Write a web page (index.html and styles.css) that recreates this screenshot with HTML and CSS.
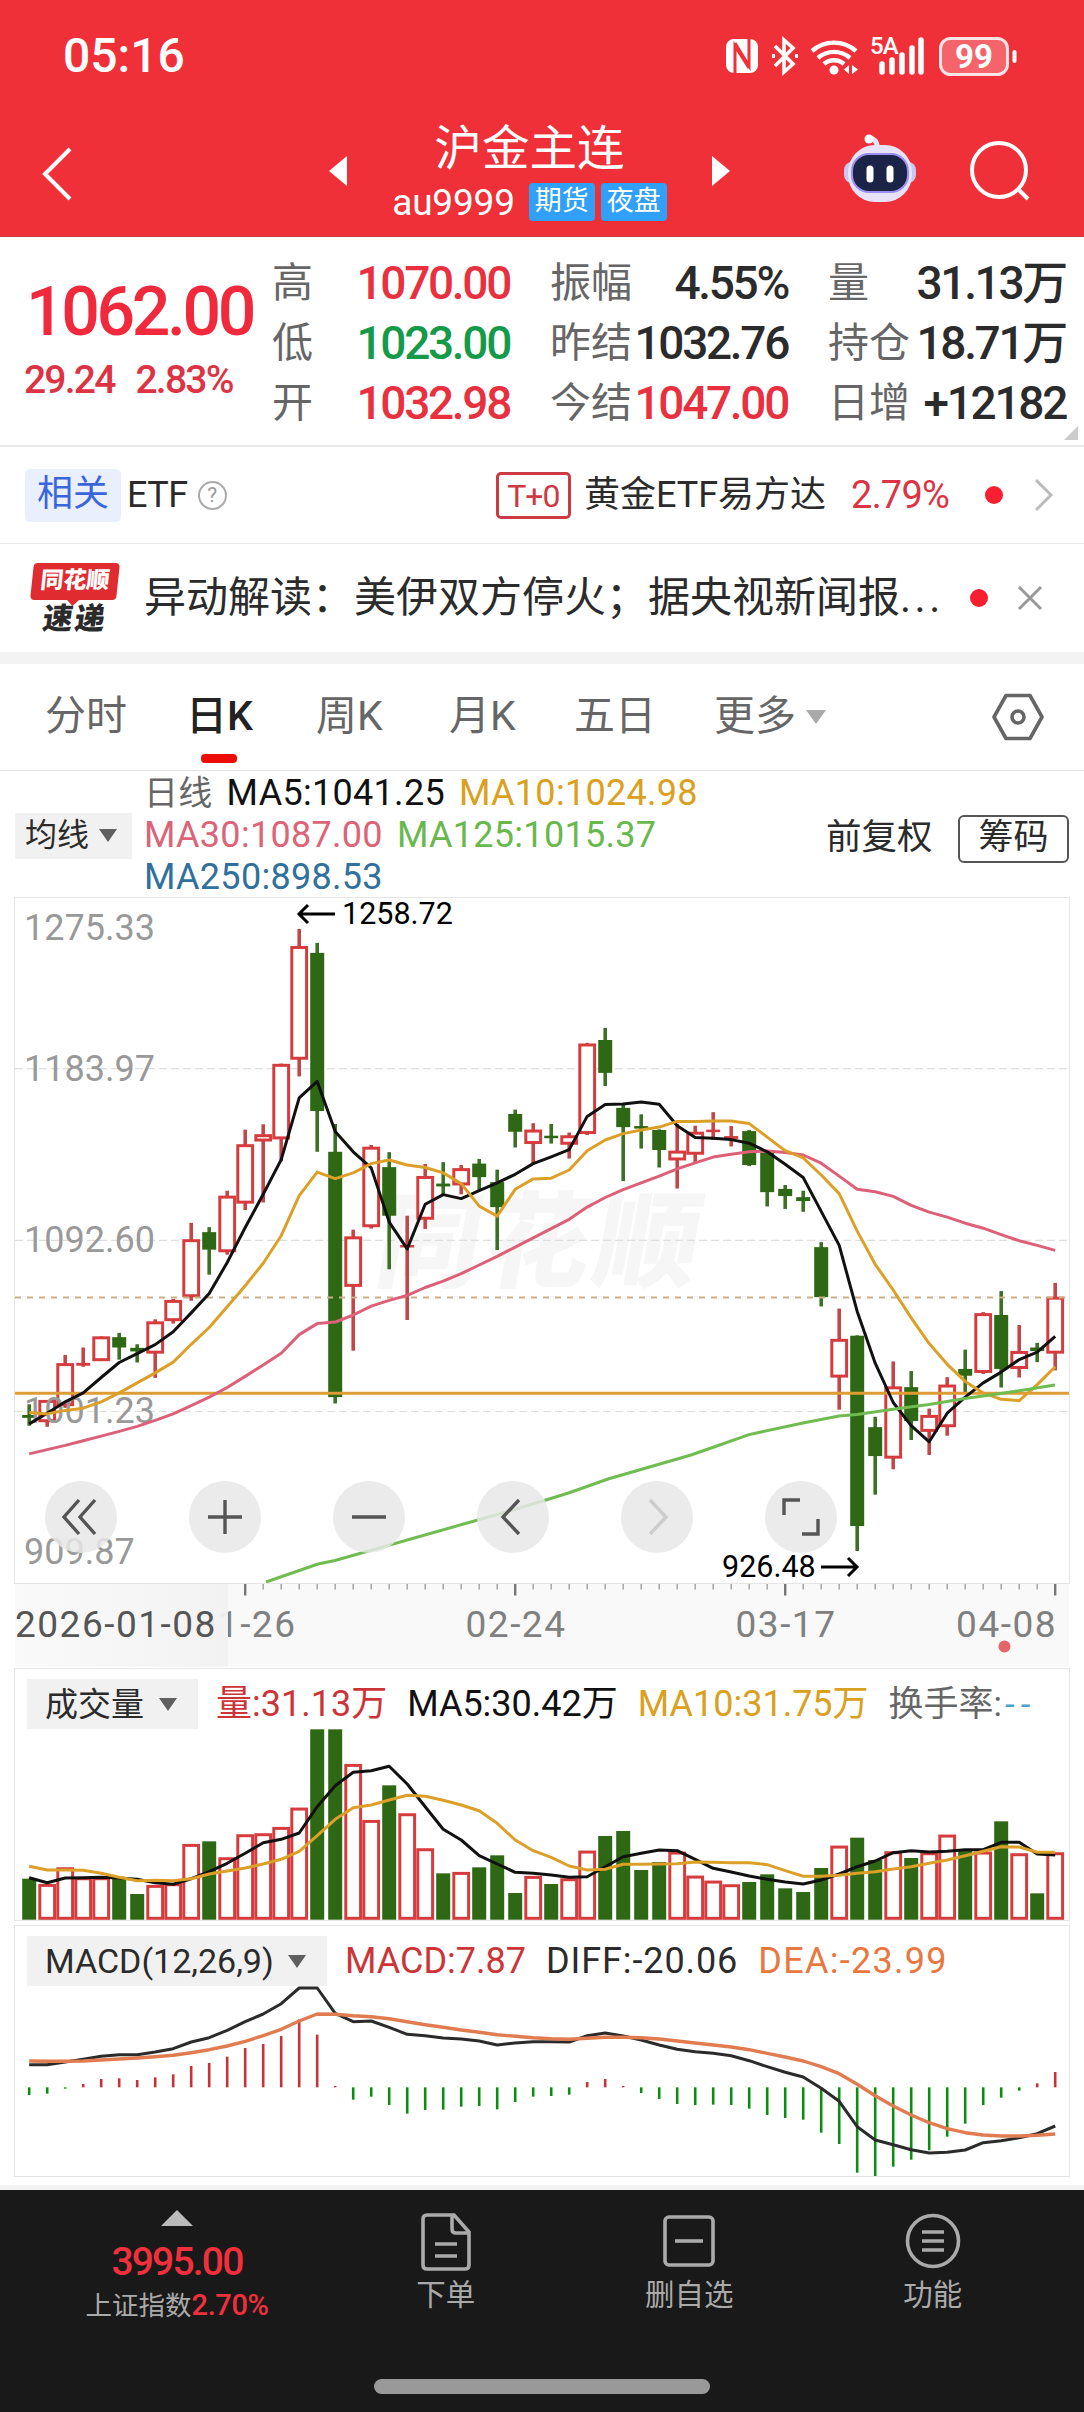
FILE: index.html
```html
<!DOCTYPE html>
<html lang="zh-CN">
<head>
    <meta charset="UTF-8">
    <meta name="viewport" content="width=device-width, initial-scale=1.0">
    <title>沪金主连 au9999</title>
    <link rel="stylesheet" href="styles.css">
</head>
<body>
    <header class="header">
        <div class="status-bar">
            <span class="clock">05:16</span>
            <svg class="status-icons" width="292" height="44" viewBox="0 0 292 44">
                <rect x="1" y="5" width="32" height="34" rx="8" fill="#fff"/>
                <path d="M10 39V12l14 22M24 5v27L10 9" fill="none" stroke="#f03038" stroke-width="3"/>
                <path d="M50 12l18 18-9 8V6l9 8-18 18" fill="none" stroke="#fff" stroke-width="3.6"/>
                <path d="M47 22h3M70 22h3" stroke="#fff" stroke-width="4"/>
                <path d="M87 17a33 33 0 0 1 44 0M93 24a24 24 0 0 1 32 0M99 30a15 15 0 0 1 20 0" fill="none" stroke="#fff" stroke-width="4.4"/>
                <circle cx="109" cy="36" r="4.5" fill="#fff"/>
                <path d="M124 31v9l-5-4.500zM127 31v9l6-4.500z" fill="#fff"/>
                <text x="145" y="20" class="net-label">5A</text>
                <path d="M157 30v8M167 26v12M177 21v17M187 14v24M196 6v32" stroke="#fff" stroke-width="5.500" stroke-linecap="round"/>
                <rect x="215.500" y="4.500" width="67" height="36" rx="10" fill="#fff" fill-opacity=".25" stroke="#fff" stroke-opacity=".85" stroke-width="3"/>
                <path d="M289.500 18v9" stroke="#fff" stroke-width="4" stroke-linecap="round"/>
                <text x="249" y="34" class="battery-label">99</text>
            </svg>
        </div>
        <div class="title-bar">
            <svg class="back" width="32" height="58" viewBox="0 0 32 58"><path d="M29 4L4 29l25 25" fill="none" stroke="#fff" stroke-width="4"/></svg>
            <svg class="prev" width="18" height="30" viewBox="0 0 18 30"><path d="M18 0v30L0 15z" fill="#fff"/></svg>
            <div class="title">
                <h1>沪金主连</h1>
                <div class="subtitle">
                    <span class="code">au9999</span>
                    <span class="badge">期货</span>
                    <span class="badge">夜盘</span>
                </div>
            </div>
            <svg class="next" width="18" height="30" viewBox="0 0 18 30"><path d="M0 0v30l18-15z" fill="#fff"/></svg>
            <svg class="robot" width="74" height="70" viewBox="0 0 74 70">
                <path d="M26 4q7 0 9 10" fill="none" stroke="#e8e4fa" stroke-width="5" stroke-linecap="round"/>
                <circle cx="26" cy="5" r="4.500" fill="#fff"/>
                <rect x="1" y="28" width="72" height="21" rx="8" fill="#c9c8f5"/>
                <rect x="5" y="11" width="64" height="57" rx="27" fill="#e7e2f8"/>
                <rect x="9" y="20" width="56" height="38" rx="17" fill="#1b2447" stroke="#9a8ff0" stroke-width="2"/>
                <path d="M27 35v10M47 35v10" stroke="#fff" stroke-width="7" stroke-linecap="round"/>
            </svg>
            <svg class="search" width="64" height="64" viewBox="0 0 64 64"><circle cx="31" cy="31" r="27" fill="none" stroke="#fff" stroke-width="4"/><path d="M50 50l10 10" stroke="#fff" stroke-width="4"/></svg>
        </div>
    </header>

    <section class="quote">
        <div class="quote-main">
            <div class="price">1062.00</div>
            <div class="change"><span>29.24</span><span>2.83%</span></div>
        </div>
        <div class="quote-grid">
            <div class="cell"><label>高</label><b class="up">1070.00</b></div>
            <div class="cell"><label>振幅</label><b>4.55%</b></div>
            <div class="cell"><label>量</label><b>31.13万</b></div>
            <div class="cell"><label>低</label><b class="down">1023.00</b></div>
            <div class="cell"><label>昨结</label><b>1032.76</b></div>
            <div class="cell"><label>持仓</label><b>18.71万</b></div>
            <div class="cell"><label>开</label><b class="up">1032.98</b></div>
            <div class="cell"><label>今结</label><b class="up">1047.00</b></div>
            <div class="cell"><label>日增</label><b>+12182</b></div>
        </div>
        <span class="corner"></span>
    </section>

    <section class="related">
        <span class="related-tag">相关</span>
        <span class="related-type">ETF</span>
        <span class="help">?</span>
        <span class="t0">T+0</span>
        <span class="related-name">黄金ETF易方达</span>
        <span class="related-rate">2.79%</span>
        <span class="dot"></span>
        <svg class="arrow" width="20" height="34" viewBox="0 0 20 34"><path d="M2 2l15 15L2 32" fill="none" stroke="#bbb" stroke-width="3"/></svg>
    </section>

    <section class="news">
        <div class="news-logo">
            <span class="logo-top">同花顺</span>
            <span class="logo-bottom">速递</span>
        </div>
        <span class="news-text">异动解读：美伊双方停火；据央视新闻报<span class="ellipsis">...</span></span>
        <span class="dot"></span>
        <svg class="close" width="24" height="24" viewBox="0 0 24 24"><path d="M1 1l22 22M23 1L1 23" stroke="#999" stroke-width="3"/></svg>
    </section>

    <nav class="tabs">
        <span class="tab">分时</span>
        <span class="tab active">日K</span>
        <span class="tab">周K</span>
        <span class="tab">月K</span>
        <span class="tab">五日</span>
        <span class="tab">更多<i class="caret"></i></span>
        <svg class="settings" width="52" height="48" viewBox="0 0 52 48"><path d="M14 2.500h24L50 24 38 45.500H14L2 24z" fill="none" stroke="#666" stroke-width="3.600" stroke-linejoin="round"/><circle cx="26" cy="24" r="6" fill="none" stroke="#666" stroke-width="3.600"/></svg>
    </nav>

    <section class="legend">
        <span class="select select-ma">均线<i class="caret"></i></span>
        <div class="legend-lines">
            <div><span class="gray">日线</span><span class="black">MA5:1041.25</span><span class="gold">MA10:1024.98</span></div>
            <div><span class="pink">MA30:1087.00</span><span class="green">MA125:1015.37</span></div>
            <div><span class="blue">MA250:898.53</span></div>
        </div>
        <span class="adjust">前复权</span>
        <span class="chips">筹码</span>
    </section>

    <main class="charts">
        <div class="panel panel-price">
            <svg id="price-chart" width="1054" height="684" viewBox="15 898 1054 684">
                <text class="watermark" x="0" y="0" transform="translate(372 1279) skewX(-10)">同花顺</text>
                <g class="grid">
                    <path d="M15 1068.600H1067M15 1240.400H1067M15 1411.500H1067"/>
                </g>
                <g id="candles"></g>
                <path class="dash-line" d="M15 1297.500H1067"/>
                <path class="cost-line" d="M15 1393.300H1069"/>
                <g class="price-labels">
                    <text x="24" y="940">1275.33</text>
                    <text x="24" y="1081">1183.97</text>
                    <text x="24" y="1252">1092.60</text>
                    <text x="24" y="1423">1001.23</text>
                    <text x="24" y="1564">909.87</text>
                </g>
                <g id="price-lines"></g>
                <path class="ma125" d="M266 1582L318 1564 335 1560.500 513 1510 546 1500 570 1492.500 608 1479 691 1455 714 1447 749 1434.600 803 1423 839 1416 857 1414.600 893 1409.300 929 1404.600 965 1398.600 1001 1393.600 1055 1385"/>
                <g class="extreme">
                    <path d="M335 914H299M308 905l-9 9 9 9M821 1567h36M848 1558l9 9-9 9"/>
                    <text x="342" y="924">1258.72</text>
                    <text x="722" y="1577">926.48</text>
                </g>
            </svg>
            <div class="tools">
                <span class="tool"><svg width="40" height="40" viewBox="0 0 40 40"><path d="M18 3L3 20l15 17M34 3L19 20l15 17"/></svg></span>
                <span class="tool"><svg width="40" height="40" viewBox="0 0 40 40"><path d="M20 3v34M3 20h34"/></svg></span>
                <span class="tool"><svg width="40" height="40" viewBox="0 0 40 40"><path d="M3 20h34"/></svg></span>
                <span class="tool"><svg width="40" height="40" viewBox="0 0 40 40"><path d="M26 3L10 20l16 17"/></svg></span>
                <span class="tool disabled"><svg width="40" height="40" viewBox="0 0 40 40"><path d="M13 3l16 17-16 17"/></svg></span>
                <span class="tool"><svg width="40" height="40" viewBox="0 0 40 40"><path d="M3 18V3h16M37 22v15H21"/></svg></span>
            </div>
        </div>

        <div class="axis">
            <svg id="axis" width="1054" height="84" viewBox="15 1582 1054 84">
                <defs>
                    <linearGradient id="fade"><stop offset="0" stop-color="#fafafa"/><stop offset="1" stop-color="#f2f2f2"/></linearGradient>
                </defs>
                <g id="ticks"></g>
                <text x="246" y="1636" text-anchor="middle">01-26</text>
                <text x="516" y="1636" text-anchor="middle">02-24</text>
                <text x="786" y="1636" text-anchor="middle">03-17</text>
                <text x="1057" y="1636" text-anchor="end">04-08</text>
                <rect x="15" y="1583" width="213" height="83" fill="url(#fade)" opacity=".95"/>
                <text class="start" x="15" y="1636">2026-01-08</text>
                <circle cx="1004.500" cy="1645.500" r="6" fill="#e46468"/>
            </svg>
        </div>

        <div class="panel panel-volume">
            <div class="panel-head">
                <span class="select select-volume">成交量<i class="caret"></i></span>
                <span class="red">量:31.13万</span>
                <span class="black">MA5:30.42万</span>
                <span class="gold">MA10:31.75万</span>
                <span class="gray">换手率:<em>--</em></span>
            </div>
            <svg id="volume-chart" width="1054" height="191" viewBox="15 1729 1054 191"></svg>
        </div>

        <div class="panel panel-macd">
            <div class="panel-head">
                <span class="select select-macd">MACD(12,26,9)<i class="caret"></i></span>
                <span class="red">MACD:7.87</span>
                <span class="dark">DIFF:-20.06</span>
                <span class="orange">DEA:-23.99</span>
            </div>
            <svg id="macd-chart" width="1054" height="191" viewBox="15 1985 1054 191"></svg>
        </div>
    </main>

    <footer class="bottom">
        <div class="bottom-nav">
            <div class="index">
                <i class="caret-up"></i>
                <span class="index-value">3995.00</span>
                <span class="index-name">上证指数<b>2.70%</b></span>
            </div>
            <div class="nav-item">
                <svg width="60" height="60" viewBox="0 0 60 60"><path d="M38 3H11q-4 0-4 4v46q0 4 4 4h38q4 0 4-4V20zM36 3v14q0 4 4 4h13M19 32h22M19 44h22"/></svg>
                <span>下单</span>
            </div>
            <div class="nav-item">
                <svg width="60" height="60" viewBox="0 0 60 60"><rect x="6" y="5" width="48" height="48" rx="4"/><path d="M16 29h28"/></svg>
                <span>删自选</span>
            </div>
            <div class="nav-item">
                <svg width="60" height="60" viewBox="0 0 60 60"><circle cx="30" cy="29" r="25.500"/><path d="M19 20h22M19 29h22M19 38h22"/></svg>
                <span>功能</span>
            </div>
        </div>
        <div class="home-bar"></div>
    </footer>

    <script src="chart.js"></script>
</body>
</html>
```
FILE: styles.css
```css
* {
    margin: 0;
    padding: 0;
    box-sizing: border-box;
}

body {
    width: 1084px;
    height: 2412px;
    overflow: hidden;
    font-family: Roboto, "Noto Sans CJK SC", sans-serif;
    line-height: 1;
    color: #2b2b2b;
    background: #fff;
    white-space: nowrap;
}

svg {
    display: block;
    flex-shrink: 0;
    overflow: visible;
}

i, em {
    font-style: normal;
}

/* header */
.header {
    height: 237px;
    background: #f03038;
    border-bottom: 1px solid #c83c40;
    color: #fff;
}

.status-bar {
    height: 112px;
    padding: 0 67px 0 63px;
    display: flex;
    align-items: center;
    justify-content: space-between;
}

.clock {
    font-size: 48px;
    font-weight: 500;
}

.net-label {
    font-size: 24px;
    font-weight: 500;
    letter-spacing: -1px;
    fill: #fff;
}

.battery-label {
    font-size: 33px;
    font-weight: 700;
    fill: #fff;
    text-anchor: middle;
}

.title-bar {
    height: 124px;
    padding-left: 41px;
    display: flex;
    align-items: flex-start;
}

.back { margin-top: 33px; }
.prev { margin: 44px 0 0 256px; }

.title {
    width: 365px;
    padding-top: 12px;
    display: flex;
    flex-direction: column;
    align-items: center;
}

.title h1 {
    font-size: 47.5px;
    font-weight: 400;
    line-height: 50px;
}

.subtitle {
    display: flex;
    align-items: center;
    gap: 6px;
    margin-top: 9px;
}

.code {
    font-size: 37px;
    letter-spacing: -0.2px;
    margin-right: 8px;
}

.badge {
    width: 66px;
    height: 38px;
    border-radius: 4px;
    background: #30a0f8;
    font-size: 27px;
    line-height: 36px;
    text-align: center;
}

.next { margin-top: 44px; }
.robot { margin: 22px 0 0 113px; }
.search { margin: 27px 0 0 51px; }

/* quote */
.quote {
    position: relative;
    height: 210px;
    border-bottom: 2px solid #e8e8e8;
    display: flex;
}

.quote-main {
    width: 272px;
    padding: 41px 0 0 26px;
    color: #f02a3c;
    font-weight: 500;
}

.price {
    font-size: 68px;
    letter-spacing: -3.4px;
}

.change {
    display: flex;
    gap: 21px;
    margin: 15px 0 0 -2px;
    font-size: 39px;
    letter-spacing: -1.8px;
    color: #dc3444;
}

.quote-grid {
    display: grid;
    grid-template-columns: repeat(3, 238px);
    grid-auto-rows: 60px;
    column-gap: 40px;
    padding-top: 16px;
}

.cell {
    display: flex;
    align-items: center;
    justify-content: space-between;
}

.cell label {
    font-size: 41px;
    color: #666;
}

.cell b {
    font-size: 46px;
    font-weight: 500;
    letter-spacing: -2.3px;
}

.up { color: #e8303e; }
.down { color: #159a4a; }

.corner {
    position: absolute;
    right: 6px;
    bottom: 5px;
    border-left: 14px solid transparent;
    border-bottom: 14px solid #ccc;
}

/* related etf */
.related {
    height: 97px;
    border-bottom: 1px solid #e8e8e8;
    padding: 0 30px 0 25px;
    display: flex;
    align-items: center;
    font-size: 36px;
}

.related-tag {
    width: 96px;
    height: 53px;
    border-radius: 5px;
    background: #e9effc;
    color: #3a66dc;
    line-height: 51px;
    text-align: center;
}

.related-type {
    margin-left: 6px;
    letter-spacing: -0.5px;
}

.help {
    width: 29px;
    height: 29px;
    margin-left: 10px;
    border: 2px solid #aaa;
    border-radius: 50%;
    color: #999;
    font-size: 21px;
    line-height: 25px;
    text-align: center;
}

.t0 {
    width: 75px;
    height: 47px;
    margin-left: auto;
    border: 3px solid #cc3a44;
    border-radius: 5px;
    color: #cc3a44;
    font-size: 32px;
    line-height: 42px;
    text-align: center;
    letter-spacing: -1px;
}

.related-name { margin-left: 13px; }

.related-rate {
    margin-left: 25px;
    color: #dc3444;
    font-size: 38px;
    letter-spacing: -0.8px;
}

.dot {
    width: 18px;
    height: 18px;
    border-radius: 50%;
    background: #f82030;
}

.related .dot { margin-left: 36px; }
.related .arrow { margin-left: 31px; }

/* news */
.news {
    height: 108px;
    padding: 0 42px 0 32px;
    display: flex;
    align-items: center;
}

.news-logo {
    width: 86px;
    margin-right: 26px;
    font-weight: 900;
    text-align: center;
}

.logo-top {
    position: relative;
    display: block;
    height: 37px;
    border-radius: 4px;
    background: #e02c30;
    color: #fff;
    font-size: 23px;
    line-height: 35px;
    transform: skewX(-6deg);
}

.logo-top::after {
    content: "";
    position: absolute;
    left: 37px;
    top: 37px;
    border: 6px solid transparent;
    border-top-color: #e02c30;
    border-bottom: 0;
}

.logo-bottom {
    display: block;
    margin-top: 4px;
    font-size: 30px;
    letter-spacing: 2px;
    transform: skewX(-8deg);
}

.news-text {
    font-size: 42px;
}

.ellipsis { letter-spacing: 3.5px; }

.news .dot { margin-left: auto; }
.news .close { margin-left: 30px; }

/* tabs */
.tabs {
    height: 119px;
    border-top: 12px solid #f3f3f3;
    border-bottom: 1px solid #e4e4e4;
    padding: 0 40px 0 45px;
    display: grid;
    grid-template-columns: 141px 130px 133px 125px 140px 1fr 52px;
    align-items: center;
    font-size: 41px;
    color: #666;
}

.tab {
    position: relative;
    height: 106px;
    display: flex;
    align-items: center;
    padding-bottom: 1px;
}

.tab.active {
    color: #222;
    font-weight: 500;
}

.tab.active::after {
    content: "";
    position: absolute;
    left: 15px;
    bottom: 7px;
    width: 36px;
    height: 9px;
    border-radius: 4px;
    background: #ec0b05;
}

.caret {
    display: inline-block;
    border: 9px solid transparent;
    border-top: 13px solid #606060;
    border-bottom: 0;
}

.tab .caret {
    margin-left: 10px;
    border-width: 14px 10px 0;
    border-top-color: #aaa;
}

/* ma legend */
.legend {
    height: 127px;
    padding: 0 15px;
    display: flex;
    align-items: center;
}

.select {
    display: flex;
    align-items: center;
    justify-content: space-between;
    background: #f1f1f1;
    color: #2b2b2b;
    font-size: 32px;
}

.select-ma {
    width: 117px;
    height: 46px;
    padding: 0 15px 2px 10px;
    margin-top: 3px;
}

.legend-lines {
    width: 666px;
    margin-left: 12px;
    font-size: 36px;
    letter-spacing: 0.3px;
}

.legend-lines div {
    height: 42px;
    display: flex;
    align-items: center;
    gap: 14px;
}

.legend-lines .gray { font-size: 34px; }

.gray { color: #666; }
.black { color: #111; }
.dark { color: #2b2b2b; }
.red { color: #cc3438; }
.gold { color: #daa020; }
.pink { color: #dc6478; }
.green { color: #68b84c; }
.blue { color: #30709c; }
.orange { color: #e87840; }

.adjust {
    width: 148px;
    padding-left: 16px;
    margin-top: 6px;
    font-size: 35.5px;
}

.chips {
    width: 111px;
    height: 48px;
    margin: 8px 0 0;
    flex-shrink: 0;
    border: 2px solid #555;
    border-radius: 6px;
    font-size: 35px;
    line-height: 42px;
    text-align: center;
}

/* charts */
.charts {
    width: 1054px;
    margin-left: 15px;
}

.panel {
    position: relative;
    outline: 1px solid #e6e6e6;
}

.panel-price { height: 685px; }
.panel-price text { font-size: 36px; }

.panel-price .watermark {
    font-size: 104px;
    font-weight: 900;
    letter-spacing: 5px;
    fill: #f6f6f6;
}

.grid path {
    stroke: #dedede;
    stroke-width: 1.2;
    stroke-dasharray: 8 4;
}

.dash-line {
    stroke: #c9b084;
    stroke-width: 2;
    stroke-dasharray: 6 6;
}

.cost-line {
    stroke: #dd9d34;
    stroke-width: 3;
}

.price-labels text { fill: #999; }

.extreme path {
    fill: none;
    stroke: #000;
    stroke-width: 3;
}

.panel-price .extreme text { font-size: 30.5px; }

.line {
    fill: none;
    stroke-width: 3;
    stroke-linejoin: round;
}

.ma5 { stroke: #111; }
.ma10 { stroke: #dca028; }
.ma30 { stroke: #dc6078; }
.diff { stroke: #2b2b2b; }
.dea { stroke: #e07c50; stroke-width: 3.4; }

.ma125 {
    fill: none;
    stroke: #70bc50;
    stroke-width: 3;
}

.tools {
    position: absolute;
    left: 30px;
    top: 583px;
    display: flex;
    gap: 72px;
}

.tool {
    width: 72px;
    height: 72px;
    border-radius: 50%;
    background: rgba(232, 232, 232, 0.85);
    display: flex;
    align-items: center;
    justify-content: center;
}

.tool path {
    fill: none;
    stroke: #555;
    stroke-width: 3.4;
}

.tool.disabled path { stroke: #ccc; }

.axis {
    height: 86px;
    padding-bottom: 2px;
    background: linear-gradient(#f9f9f9 84px, #fff 84px);
}

.axis text {
    font-size: 37px;
    letter-spacing: 1.5px;
    fill: #808080;
}

.axis .start { fill: #555; }

.panel-volume { height: 251px; }

.panel-macd {
    height: 250px;
    margin-top: 6px;
}

.panel-head {
    height: 60px;
    padding: 10px 0 0 12px;
    display: flex;
    align-items: center;
    font-size: 36px;
}

.panel-head .select {
    height: 50px;
    padding: 0 21px 0 18px;
    margin-right: 18px;
}

.select-volume { width: 171px; font-size: 33px; }
.select-macd { width: 300px; font-size: 34px; }
.panel-head span + span { margin-right: 20px; }
.panel-head .dark { letter-spacing: 0.9px; }
.panel-head .orange { letter-spacing: 1.3px; }
.panel-volume .gray { font-size: 35px; }

.panel-head em {
    color: #48a4cc;
    letter-spacing: 6px;
    margin-left: 3px;
}

/* bottom nav */
.bottom {
    height: 227px;
    margin-top: 9px;
    border-top: 5px solid #f3f3f3;
    background: #191919;
}

.bottom-nav {
    height: 189px;
    display: flex;
}

.index {
    width: 324px;
    padding: 20px 0 0 30px;
    display: flex;
    flex-direction: column;
    align-items: center;
}

.caret-up {
    border: 16px solid transparent;
    border-top: 0;
    border-bottom-color: #bbb;
}

.index-value {
    margin-top: 17px;
    font-size: 39px;
    font-weight: 500;
    letter-spacing: -1.8px;
    color: #f0303c;
}

.index-name {
    margin-top: 9px;
    font-size: 26.5px;
    color: #aaa;
}

.index-name b {
    font-size: 29px;
    font-weight: 500;
    letter-spacing: -0.4px;
    color: #f0303c;
}

.nav-item {
    width: 243.5px;
    padding-top: 22px;
    display: flex;
    flex-direction: column;
    align-items: center;
    font-size: 29.5px;
    color: #aaa;
}

.nav-item svg {
    fill: none;
    stroke: #aaa;
    stroke-width: 3.6;
    margin-bottom: 9px;
}

.home-bar {
    width: 336px;
    height: 15px;
    margin: 0 auto;
    border-radius: 8px;
    background: #999;
}
```
FILE: chart.js
```js
const X0 = 29.2;
const STEP = 18;
const UP = '#d63c3e';
const DOWN = '#2e6814';

// [high, body top, body bottom, low, up], in chart units
const candles = [
    [1440, 1470, 1478, 1500, 0], [1428, 1428, 1490, 1503, 1], [1302, 1325, 1445, 1450, 1], [1281, 1324, 1332, 1335, 1],
    [1250, 1250, 1319, 1319, 1], [1240, 1252, 1281, 1315, 0], [1272, 1282, 1292, 1323, 0], [1202, 1208, 1298, 1366, 1],
    [1145, 1148, 1207, 1214, 1], [932, 978, 1140, 1150, 1], [944, 958, 1007, 1077, 0], [842, 856, 1014, 1021, 1],
    [671, 712, 878, 896, 1], [656, 684, 704, 875, 1], [486, 487, 698, 760, 1], [109, 157, 475, 522, 1],
    [148, 176, 619, 733, 0], [655, 733, 1420, 1438, 0], [951, 970, 1111, 1290, 1], [714, 719, 944, 948, 1],
    [734, 776, 912, 1062, 0], [912, 994, 1001, 1204, 1], [767, 801, 923, 949, 1], [762, 822, 830, 852, 0],
    [770, 779, 827, 852, 1], [753, 766, 804, 840, 0], [783, 818, 888, 1008, 0], [615, 627, 677, 721, 0],
    [653, 671, 711, 765, 1], [655, 688, 695, 710, 0], [679, 687, 713, 752, 1], [428, 430, 683, 686, 1],
    [386, 420, 512, 549, 0], [600, 610, 664, 815, 0], [628, 661, 668, 724, 0], [670, 672, 728, 777, 0],
    [655, 730, 757, 836, 1], [660, 677, 741, 765, 1], [622, 671, 678, 700, 1], [661, 689, 697, 718, 1],
    [672, 675, 770, 773, 0], [730, 735, 846, 886, 0], [826, 837, 857, 893, 0], [842, 860, 871, 901, 0],
    [986, 1000, 1140, 1166, 0], [1172, 1257, 1365, 1455, 1], [1247, 1248, 1781, 1851, 0], [1475, 1504, 1585, 1693, 0],
    [1320, 1390, 1592, 1622, 1], [1347, 1392, 1487, 1540, 0], [1452, 1470, 1517, 1582, 1], [1364, 1385, 1504, 1528, 1],
    [1287, 1341, 1360, 1410, 0], [1182, 1185, 1352, 1355, 1], [1123, 1190, 1341, 1393, 0], [1218, 1291, 1341, 1365, 1],
    [1268, 1281, 1291, 1322, 0], [1100, 1139, 1298, 1345, 1]
];

const ma5 = [1495, 1465, 1433, 1408, 1365, 1323, 1298, 1273, 1237, 1184, 1130, 1043, 945, 852, 755, 582, 536, 676, 733, 778, 930, 1005, 880, 853, 864, 842, 820, 796, 766, 747, 727, 634, 601, 599, 594, 600, 660, 693, 695, 699, 709, 733, 768, 805, 900, 995, 1180, 1325, 1435, 1500, 1545, 1465, 1420, 1380, 1350, 1315, 1294, 1250];
const ma10 = [1463, 1467, 1457, 1451, 1433, 1408, 1380, 1352, 1322, 1272, 1225, 1167, 1108, 1045, 968, 856, 790, 808, 792, 766, 756, 770, 777, 792, 822, 885, 913, 838, 809, 807, 784, 730, 700, 682, 672, 664, 648, 648, 647, 647, 654, 692, 730, 750, 798, 850, 955, 1048, 1120, 1198, 1270, 1328, 1376, 1408, 1426, 1430, 1385, 1335];
const ma30 = [1579, 1567, 1555, 1542, 1529, 1516, 1502, 1485, 1467, 1444, 1420, 1393, 1362, 1330, 1297, 1245, 1214, 1210, 1190, 1165, 1149, 1135, 1113, 1095, 1074, 1050, 1026, 1000, 974, 948, 922, 888, 861, 839, 820, 801, 781, 764, 748, 740, 733, 731, 735, 742, 765, 801, 838, 845, 858, 883, 902, 916, 933, 947, 965, 982, 995, 1009];

const volume = [656, 672, 622, 652, 652, 655, 702, 675, 670, 552, 544, 592, 523, 520, 501, 443, 208, 208, 312, 480, 376, 460, 565, 640, 636, 622, 586, 699, 648, 672, 655, 572, 528, 513, 630, 606, 575, 647, 662, 673, 666, 643, 685, 696, 624, 557, 533, 600, 574, 594, 577, 524, 567, 575, 484, 580, 700, 577];
const vol5 = [653, 668, 654, 653, 652, 654, 658, 668, 673, 656, 635, 610, 580, 548, 538, 519, 440, 377, 337, 332, 319, 372, 440, 508, 540, 587, 612, 637, 640, 645, 652, 650, 620, 590, 580, 570, 572, 598, 625, 636, 648, 658, 666, 672, 660, 642, 620, 603, 578, 572, 576, 574, 569, 569, 547, 547, 582, 585];
const vol10 = [619, 630, 630, 631, 640, 652, 662, 661, 662, 656, 642, 633, 624, 612, 598, 574, 527, 478, 443, 435, 420, 406, 409, 421, 435, 452, 490, 540, 572, 592, 618, 630, 628, 613, 613, 612, 611, 606, 607, 608, 608, 614, 632, 649, 649, 646, 640, 635, 627, 620, 610, 600, 587, 574, 560, 561, 577, 577];

const macd = [537, 533, 518, 504, 489, 487, 492, 484, 475, 450, 441, 422, 396, 384, 360, 310, 356, 510, 551, 542, 567, 593, 582, 581, 572, 570, 580, 558, 542, 540, 536, 498, 489, 510, 531, 549, 564, 567, 566, 567, 578, 597, 606, 611, 650, 684, 770, 783, 752, 731, 703, 662, 623, 567, 545, 524, 502, 468];
const diff = [446, 446, 438, 430, 421, 416, 416, 408, 398, 378, 365, 343, 317, 294, 263, 216, 216, 292, 317, 315, 334, 355, 359, 366, 369, 375, 387, 381, 377, 377, 378, 359, 351, 360, 372, 387, 400, 407, 412, 419, 434, 452, 469, 483, 517, 556, 632, 672, 686, 701, 711, 709, 702, 680, 674, 665, 653, 630];
const dea = [435, 436, 436, 435, 432, 429, 426, 422, 418, 410, 401, 390, 376, 359, 340, 315, 294, 295, 299, 302, 308, 317, 326, 334, 342, 349, 356, 361, 365, 368, 370, 367, 364, 364, 365, 369, 375, 381, 387, 393, 401, 412, 423, 435, 452, 473, 505, 539, 570, 597, 620, 638, 650, 657, 660, 660, 658, 654];

const x = i => X0 + STEP * i;
const priceY = v => 890 + v / 2.8;
const volumeY = v => 1660 + v / 3;
const macdY = v => 1915 + v / 3;

function line(data, y, cls) {
    const points = data.map((v, i) => x(i).toFixed(1) + ',' + y(v).toFixed(1)).join(' ');
    return `<polyline class="line ${cls}" points="${points}"/>`;
}

function bar(cx, top, bottom, up) {
    // rising bars are hollow, falling bars are filled
    if (up && bottom - top > 4) {
        return `<rect x="${cx - 7.4}" y="${top + 1.4}" width="14.8" height="${bottom - top - 2.8}" fill="#fff" stroke="${UP}" stroke-width="3"/>`;
    }
    return `<rect x="${cx - 7}" y="${top}" width="14" height="${bottom - top}" fill="${up ? UP : DOWN}"/>`;
}

function drawPrice() {
    let html = '';
    candles.forEach(([high, top, bottom, low, up], i) => {
        html += `<path d="M${x(i)} ${priceY(high)}V${priceY(low)}" stroke="${up ? '#c44648' : '#3c7024'}" stroke-width="3.6"/>`;
        html += bar(x(i), priceY(top), priceY(bottom), up);
    });
    document.getElementById('candles').innerHTML = html;
    document.getElementById('price-lines').innerHTML =
        line(ma30, priceY, 'ma30') + line(ma5, priceY, 'ma5') + line(ma10, priceY, 'ma10');
}

function drawTicks() {
    let html = '';
    for (let i = 12; i < candles.length; i++) {
        const major = (i - 12) % 15 === 0;
        html += `<path d="M${x(i)} 1583V${major ? 1594.5 : 1588.5}" stroke="${major ? '#777' : '#aaa'}" stroke-width="${major ? 2.4 : 1.6}"/>`;
    }
    document.getElementById('ticks').innerHTML = html;
}

function drawVolume() {
    let html = '';
    volume.forEach((v, i) => {
        html += bar(x(i), volumeY(v), 1919.7, candles[i][4]);
    });
    html += line(vol5, volumeY, 'ma5') + line(vol10, volumeY, 'ma10');
    document.getElementById('volume-chart').innerHTML = html;
}

function drawMacd() {
    let html = '';
    macd.forEach((v, i) => {
        html += `<path d="M${x(i)} ${macdY(514)}V${macdY(v)}" stroke="${v < 514 ? '#c43438' : '#0c8c10'}" stroke-width="2.6"/>`;
    });
    html += line(diff, macdY, 'diff') + line(dea, macdY, 'dea');
    document.getElementById('macd-chart').innerHTML = html;
}

drawPrice();
drawTicks();
drawVolume();
drawMacd();
```
